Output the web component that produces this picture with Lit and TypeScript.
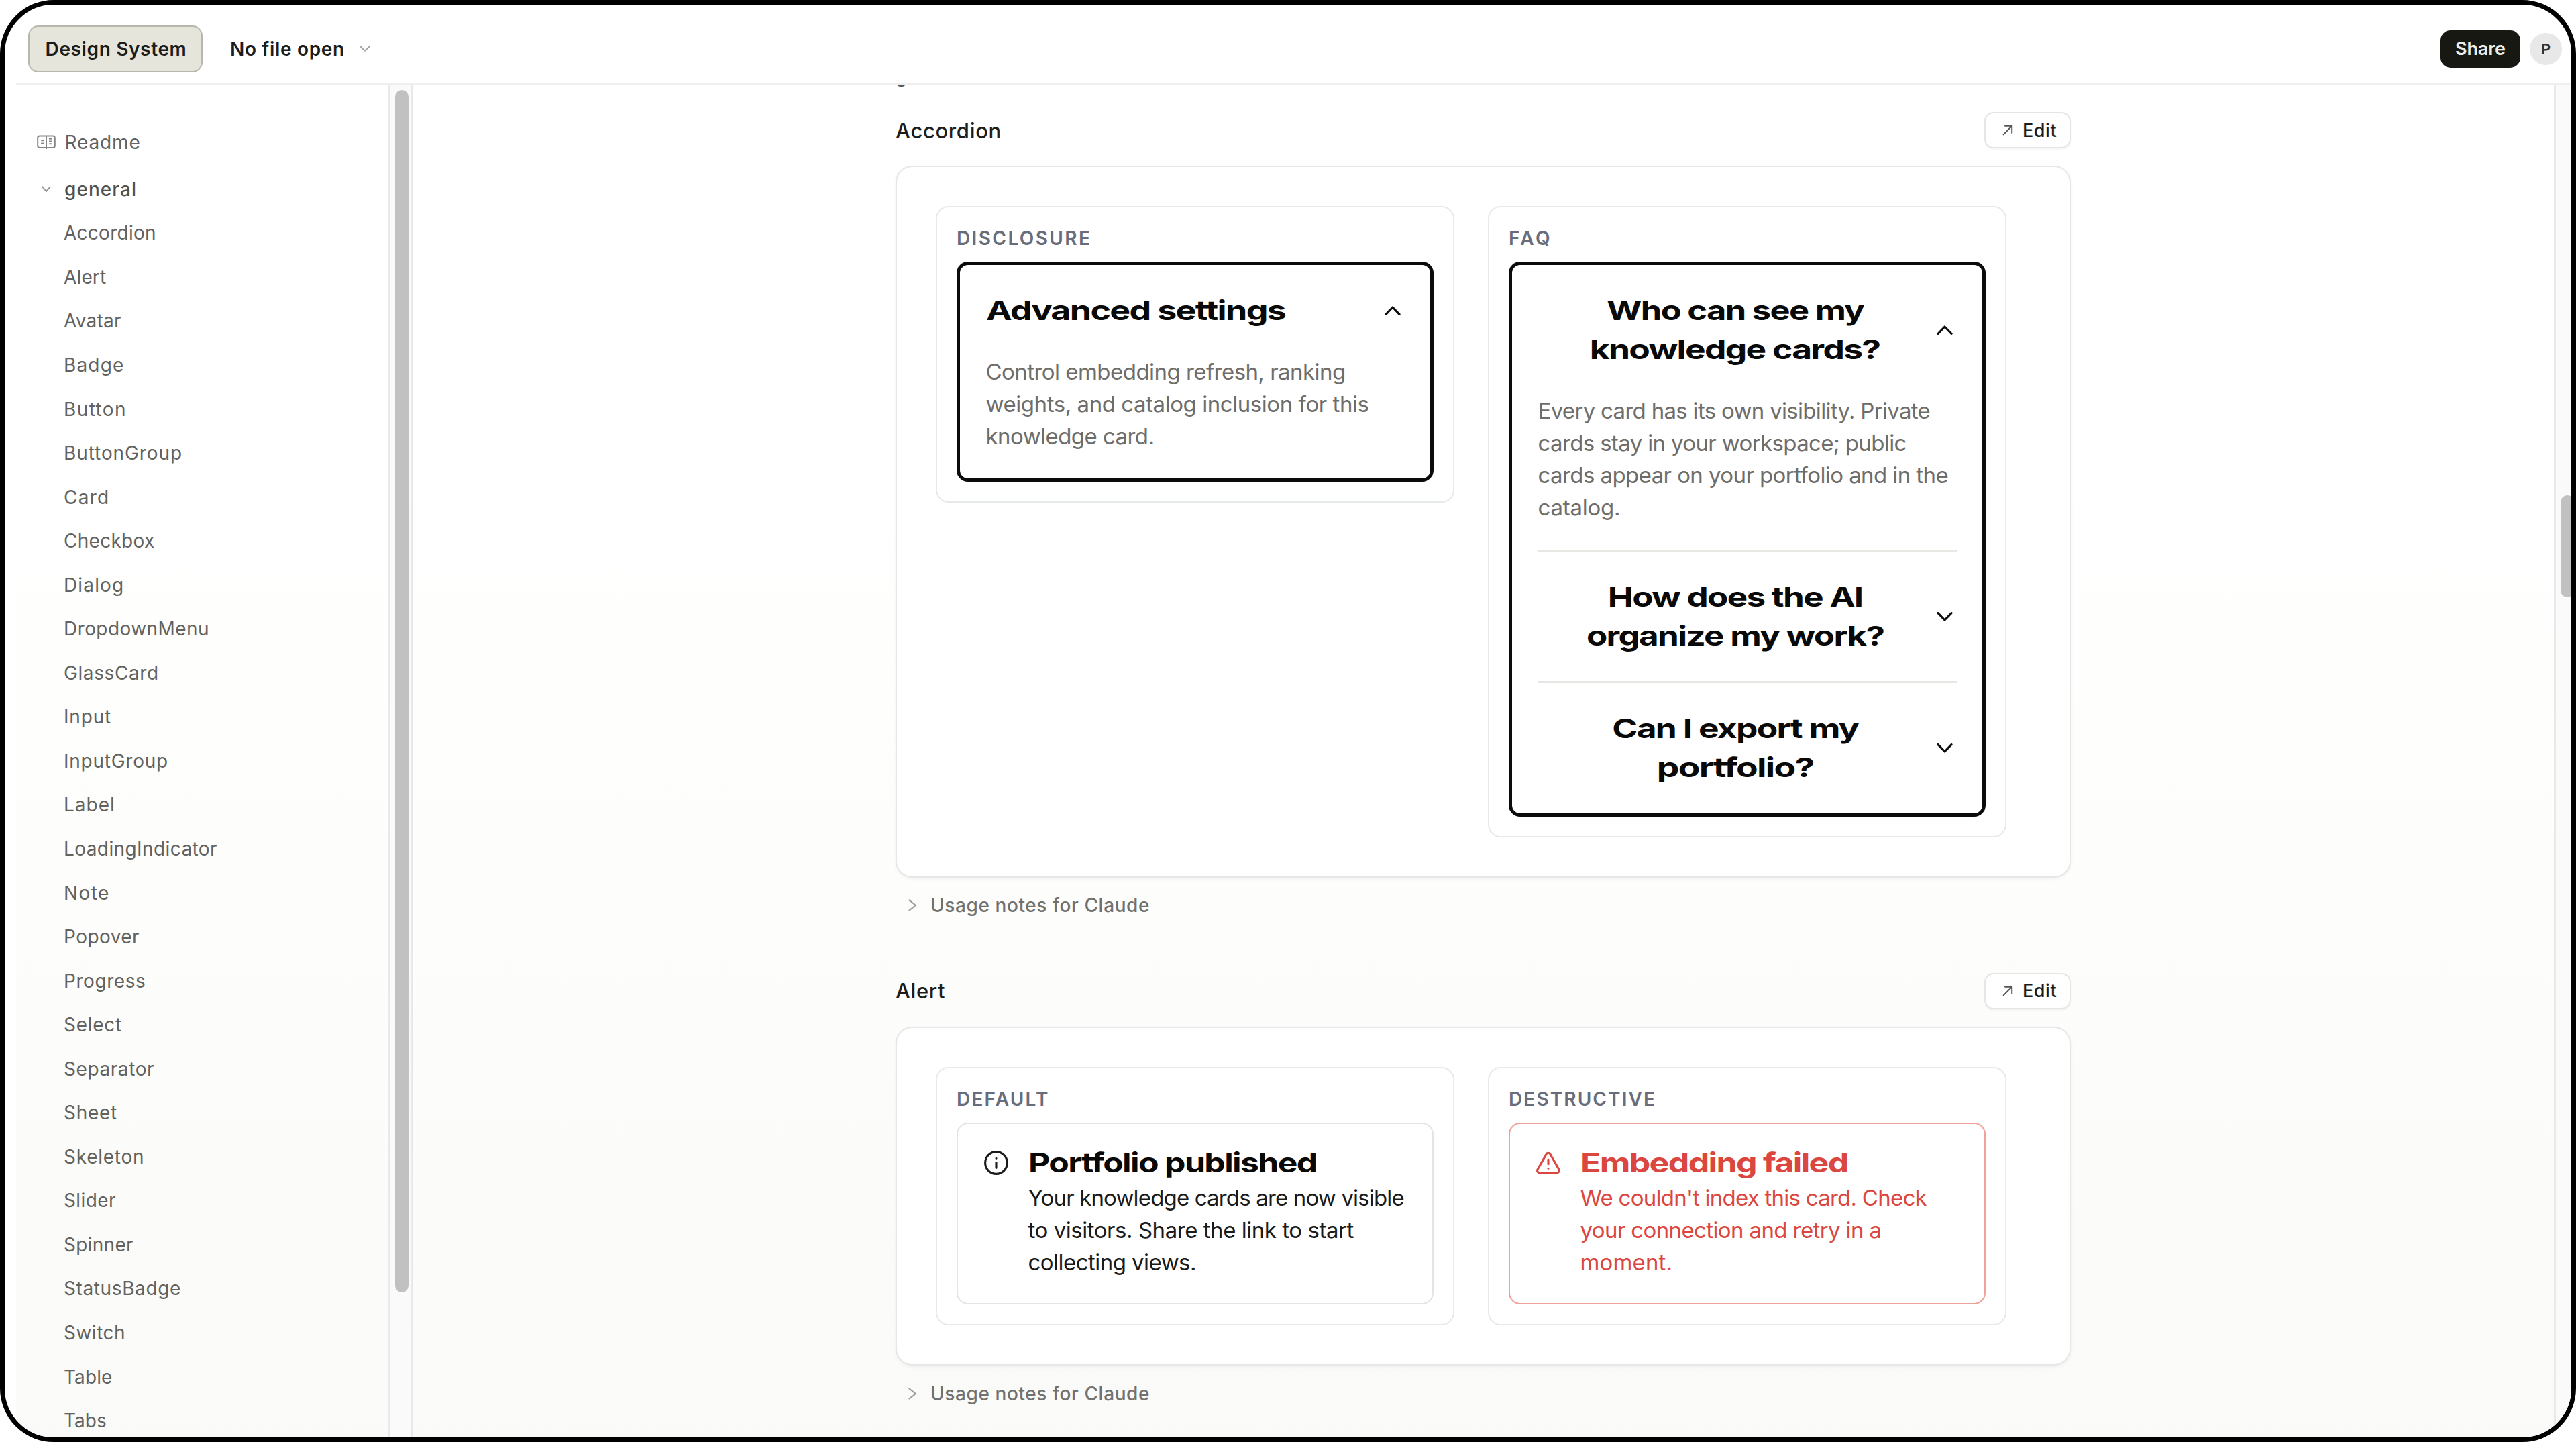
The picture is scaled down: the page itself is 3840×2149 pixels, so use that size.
import { LitElement, html, css, svg, nothing, TemplateResult } from "lit";
import { customElement, property } from "lit/decorators.js";
import { classMap } from "lit/directives/class-map.js";
import { styleMap } from "lit/directives/style-map.js";

type Line = [text: string, width: number];

const ctx = document.createElement("canvas").getContext("2d")!;

/** Ink width of a text in Inter at the given weight and size. */
function inkWidth(text: string, weight: number, size: number): number {
  ctx.font = `${weight} ${size}px Inter`;
  const m = ctx.measureText(text);
  return m.actualBoundingBoxLeft + m.actualBoundingBoxRight;
}

/** Text set to a known width by tracking. */
function tracked([text, width]: Line, weight: number, size: number) {
  const spacing = (width - inkWidth(text, weight, size)) / (text.length - 1);
  return html`<span class="line" style=${styleMap({ letterSpacing: `${spacing.toFixed(3)}px` })}>${text}</span>`;
}

/** Tracking of the display face, in pixels before widening. */
const DISPLAY_TRACKING = -1.3;

/** Display text: a bold, tightly set face widened to a known width. */
function widened([text, width]: Line, origin: "left" | "center") {
  const scale = width / (inkWidth(text, 750, 40) + DISPLAY_TRACKING * (text.length - 1));
  return html`<span class=${classMap({ wide: true, left: origin === "left" })}
    style=${styleMap({ transform: `scaleX(${scale.toFixed(4)})` })}>${text}</span>`;
}

const base = css`
  :host { display: block; box-sizing: border-box; font-family: Inter, "Liberation Sans", sans-serif; }
  * { box-sizing: border-box; }
  svg { display: block; fill: none; stroke: currentColor; stroke-linecap: round; stroke-linejoin: round; flex: none; }
  .line { display: block; white-space: nowrap; }
  .wide { display: inline-block; white-space: nowrap; font-weight: 750; letter-spacing: -1.3px; transform-origin: center; }
  .wide.left { transform-origin: left; }
`;

const NAV: Line[] = [
  ["Accordion", 136], ["Alert", 63], ["Avatar", 85], ["Badge", 86], ["Button", 89], ["ButtonGroup", 173],
  ["Card", 64], ["Checkbox", 134], ["Dialog", 85], ["DropdownMenu", 213], ["GlassCard", 138], ["Input", 68],
  ["InputGroup", 152], ["Label", 72], ["LoadingIndicator", 226], ["Note", 64], ["Popover", 118],
  ["Progress", 119], ["Select", 85], ["Separator", 133], ["Sheet", 78], ["Skeleton", 117], ["Slider", 76],
  ["Spinner", 102], ["StatusBadge", 172], ["Switch", 89], ["Table", 70], ["Tabs", 62],
].map(([t, w]) => [t, t === "Popover" ? 110 : w] as Line);

@customElement("ds-toolbar")
export class DsToolbar extends LitElement {
  static styles = [base, css`
    :host { display: flex; align-items: center; height: 117px; padding: 14px 14px 0 35px; color: #1c1c1a; }
    .project { display: flex; align-items: center; justify-content: center; width: 260px; height: 70px; padding-left: 2px;
      border: 2px solid #b7b7ac; border-radius: 15px; background: #e6e5dc; font-size: 28px; font-weight: 600; }
    .file { display: flex; align-items: center; gap: 22px; margin-left: 41px; font-size: 28px; font-weight: 600; }
    .file svg { width: 16px; height: 9px; color: #a2a2a2; stroke-width: 2; }
    .spacer { flex: 1; }
    .share { display: flex; align-items: center; justify-content: center; width: 119px; height: 56px;
      border-radius: 15px; background: #181813; color: #ecece6; font-size: 27px; font-weight: 600; }
    .avatar { display: flex; align-items: center; justify-content: center; width: 48px; height: 48px;
      margin-left: 14px; border-radius: 50%; background: #e8e8e8; color: #333; font-size: 22px; font-weight: 600; }
  `];
  render() {
    return html`
      <div class="project">${tracked(["Design System", 207], 600, 28)}</div>
      <div class="file">${tracked(["No file open", 167], 600, 28)}
        <svg viewBox="0 0 16 9"><path d="M1.2 1.2 8 7.8l6.8-6.6"/></svg></div>
      <div class="spacer"></div>
      <div class="share">${tracked(["Share", 73], 600, 27)}</div>
      <div class="avatar">P</div>`;
  }
}

@customElement("ds-sidebar")
export class DsSidebar extends LitElement {
  static styles = [base, css`
    :host { width: 555px; flex: none; padding-top: 52px; overflow: hidden; color: #62625f; font-size: 28px; }
    .row { display: flex; align-items: center; height: 65.55px; padding-left: 71px; }
    .readme, .group { padding-left: 31px; }
    .readme { margin-bottom: 4.5px; gap: 13.5px; }
    .group { font-weight: 500; color: #50504e; gap: 20px; padding-left: 38px; }
    .book { width: 28px; height: 22px; stroke-width: 2; color: #868686; }
    .caret { width: 14px; height: 10px; stroke-width: 2; color: #999; }
  `];
  render() {
    return html`
      <div class="row readme">
        <svg class="book" viewBox="0 0 28 22">
          <rect x="1.2" y="1.4" width="25.6" height="17.6" rx="3"/>
          <path d="M14 2v18.6M7 8.2h2.4M7 12.6h2.4M18.8 5.8h2.4M18.8 9.4h2.4M18.8 13.2h2.4"/>
        </svg>${tracked(["Readme", 109], 400, 28)}</div>
      <div class="row group">
        <svg class="caret" viewBox="0 0 14 10"><path d="M1.2 1.4 7 8l5.8-6.6"/></svg>
        ${tracked(["general", 105], 500, 28)}</div>
      ${NAV.map((n) => html`<div class="row">${tracked(n, 400, 28)}</div>`)}`;
  }
}

@customElement("ds-chevron")
export class DsChevron extends LitElement {
  @property({ type: Boolean }) open = false;
  static styles = [base, css`
    :host { width: 36px; flex: none; color: #0c0c0c; }
    svg { width: 24px; height: 14px; margin: 0 auto; stroke-width: 3.2; }
    .up { transform: rotate(180deg); }
  `];
  render() {
    return html`<svg class=${classMap({ up: this.open })} viewBox="0 0 24 14"><path d="M2 1.6 12 12 22 1.6"/></svg>`;
  }
}

interface Item { title: Line[]; body?: Line[] }

@customElement("ds-accordion")
export class DsAccordion extends LitElement {
  @property({ attribute: false }) items: Item[] = [];
  @property({ type: Boolean }) centered = false;
  static styles = [base, css`
    :host { border: 5px solid #0b0b0b; border-radius: 17px; padding: 0 38.5px; background: #fff; }
    .item + .item { border-top: 3px solid #e7e7e4; }
    .trigger { display: flex; align-items: center; padding: 38.6px 0; }
    .title { flex: 1; display: flex; flex-direction: column; align-items: flex-start; color: #090909;
      font-size: 40px; line-height: 58px; }
    .title.centered { align-items: center; }
    .body { padding-bottom: 38.6px; color: #6e6d6a; font-size: 33px; line-height: 48.1px; }
  `];
  render() {
    return this.items.map((it) => html`
      <div class="item">
        <div class="trigger">
          <div class=${classMap({ title: true, centered: this.centered })}>
            ${it.title.map((l) => widened(l, this.centered ? "center" : "left"))}
          </div>
          <ds-chevron ?open=${!!it.body}></ds-chevron>
        </div>
        ${it.body ? html`<div class="body">${it.body.map((l) => tracked(l, 400, 33))}</div>` : nothing}
      </div>`);
  }
}

const INFO = svg`<circle cx="12" cy="12" r="10"/><path d="M12 16.5v-4.8M12 7.9h.01"/>`;
const WARN = svg`<path d="m21.73 18-8-14a2 2 0 0 0-3.48 0l-8 14A2 2 0 0 0 4 21h16a2 2 0 0 0 1.73-3M12 9v4M12 17h.01"/>`;

@customElement("ds-alert")
export class DsAlert extends LitElement {
  @property({ attribute: false }) heading: Line = ["", 1];
  @property({ attribute: false }) lines: Line[] = [];
  @property({ type: Boolean, reflect: true }) destructive = false;
  static styles = [base, css`
    :host { display: flex; gap: 29.5px; border: 2px solid #e3e5e5; border-radius: 17px; padding: 37px 38.5px 37px 39px;
      background: #fff; color: #1a1a1a; }
    :host([destructive]) { border-color: #f0a19c; color: #db4640; }
    svg { width: 36px; height: 42px; stroke-width: 1.9; }
    .title { height: 42px; margin-bottom: 7.2px; color: #090909; font-size: 40px; line-height: 42px; }
    :host([destructive]) .title { color: #db4640; }
    .body { font-size: 33px; line-height: 48.1px; }
  `];
  render() {
    return html`
      <svg viewBox="1 1 22 22">${this.destructive ? WARN : INFO}</svg>
      <div>
        <div class="title">${widened(this.heading, "left")}</div>
        <div class="body">${this.lines.map((l) => tracked(l, 400, 33))}</div>
      </div>`;
  }
}

@customElement("ds-section")
export class DsSection extends LitElement {
  @property({ attribute: false }) heading: Line = ["", 1];
  @property({ attribute: false }) cells: { label: Line; content: TemplateResult }[] = [];
  static styles = [base, css`
    .head { display: flex; align-items: center; justify-content: space-between; height: 54px; margin-bottom: 26px;
      color: #1c1c1a; font-size: 31px; font-weight: 500; }
    .edit { display: flex; align-items: center; gap: 14px; width: 129px; height: 54px; padding-left: 25px;
      border: 2px solid #e5e5e4; border-radius: 14px; background: #fff; font-size: 27px;
      box-shadow: 0 2px 3px rgb(0 0 0 / 4%); }
    .edit svg { width: 16px; height: 16px; stroke-width: 2; color: #555; }
    .panel { display: flex; align-items: flex-start; gap: 50px; padding: 58px; border: 2px solid #e6e7e6;
      border-radius: 25px; background: #fff; box-shadow: 0 2px 5px rgb(0 0 0 / 5%); }
    .cell { width: 773px; padding: 29px; border: 2px solid #e7eaea; border-radius: 19px; }
    .label { height: 34px; margin-bottom: 18px; color: #686d7b; font-size: 28px; font-weight: 600; line-height: 34px; }
    .notes { display: flex; align-items: center; gap: 20px; height: 83.5px; padding-left: 19px;
      color: #71716f; font-size: 28px; font-weight: 500; }
    .notes svg { width: 13px; height: 18px; stroke-width: 2.2; color: #9c9c9a; }
  `];
  render() {
    return html`
      <div class="head">
        ${tracked(this.heading, 500, 31)}
        <div class="edit">
          <svg viewBox="0 0 16 16"><path d="M1.6 14.4 14 2M4 1.8h10.2V12"/></svg>
          ${tracked(["Edit", 48.5], 500, 27)}
        </div>
      </div>
      <div class="panel">
        ${this.cells.map((c) => html`<div class="cell">
          <div class="label">${tracked(c.label, 600, 28)}</div>${c.content}</div>`)}
      </div>
      <div class="notes">
        <svg viewBox="0 0 13 18"><path d="m1.5 1.5 9.5 7.5-9.5 7.5"/></svg>
        ${tracked(["Usage notes for Claude", 324], 500, 28)}
      </div>`;
  }
}

const DISCLOSURE: Item[] = [{
  title: [["Advanced settings", 446]],
  body: [["Control embedding refresh, ranking", 533.5], ["weights, and catalog inclusion for this", 569], ["knowledge card.", 247]],
}];

const FAQ: Item[] = [
  {
    title: [["Who can see my", 384.6], ["knowledge cards?", 430]],
    body: [["Every card has its own visibility. Private", 582], ["cards stay in your workspace; public", 548],
      ["cards appear on your portfolio and in the", 610], ["catalog.", 119.5]],
  },
  { title: [["How does the AI", 376], ["organize my work?", 442]] },
  { title: [["Can I export my", 367], ["portfolio?", 231]] },
];

@customElement("app-root")
export class AppRoot extends LitElement {
  static styles = [base, css`
    :host { height: 2149px; background: #fff; }
    .window { height: 2149px; border: 7px solid #000; border-radius: 80px; overflow: hidden; background: #fff; }
    .workspace { display: flex; height: 2018px; margin-left: 17px; border-top: 3px solid #efefef;
      background: linear-gradient(#fff 28%, #fdfdfb 62%, #fafaf8); }
    .track { flex: none; border-left: 2px solid #e9e9ea; background: #fafafa; }
    .track.nav { width: 36px; border-right: 2px solid #e9e9ea; padding: 7px 0 0 8px; }
    .track.page { width: 26px; border-left-width: 3px; padding: 611px 0 0 7px; overflow: hidden; }
    .thumb { width: 19.5px; border-radius: 10px; background: #c1c1c1; }
    .nav .thumb { height: 1792px; }
    .page .thumb { height: 152px; }
    .canvas { flex: 1; padding-left: 720px; overflow: hidden; }
    .group { height: 58px; margin: -18px 0 0; color: #555; font-size: 28px; font-weight: 500; line-height: 9px; }
    ds-section { width: 1752px; }
    ds-section + ds-section { margin-top: 58.8px; }
  `];
  render() {
    return html`
      <div class="window">
        <ds-toolbar></ds-toolbar>
        <div class="workspace">
          <ds-sidebar></ds-sidebar>
          <div class="track nav"><div class="thumb"></div></div>
          <div class="canvas">
            <div class="group">general</div>
            <ds-section .heading=${["Accordion", 155.5]} .cells=${[
              { label: ["DISCLOSURE", 196], content: html`<ds-accordion .items=${DISCLOSURE}></ds-accordion>` },
              { label: ["FAQ", 59], content: html`<ds-accordion centered .items=${FAQ}></ds-accordion>` },
            ]}></ds-section>
            <ds-section .heading=${["Alert", 73]} .cells=${[
              { label: ["DEFAULT", 134], content: html`<ds-alert .heading=${["Portfolio published", 426]} .lines=${[
                ["Your knowledge cards are now visible", 560], ["to visitors. Share the link to start", 486], ["collecting views.", 247.5]]}></ds-alert>` },
              { label: ["DESTRUCTIVE", 215], content: html`<ds-alert destructive .heading=${["Embedding failed", 395]} .lines=${[
                ["We couldn't index this card. Check", 517], ["your connection and retry in a", 447], ["moment.", 133]]}></ds-alert>` },
            ]}></ds-section>
          </div>
          <div class="track page"><div class="thumb"></div></div>
        </div>
      </div>`;
  }
}
